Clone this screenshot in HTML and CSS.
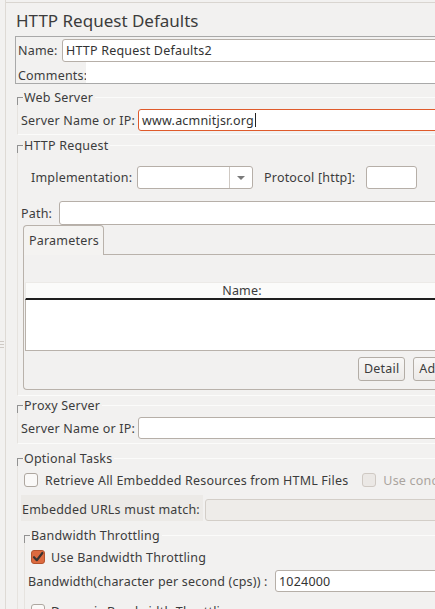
FILE: index.html
```html
<!DOCTYPE html>
<html>
<head>
<meta charset="utf-8">
<link rel="stylesheet" href="styles.css">
</head>
<body>
<div class="app">
  <div class="splitter"><div class="grip"></div></div>
  <div class="main">
    <div class="title">HTTP Request Defaults</div>

    <div class="name-panel">
      <div class="name-row">
        <span class="lbl-name">Name:</span>
        <div class="field">HTTP Request Defaults2</div>
      </div>
      <div class="comments-row">
        <span class="lbl-comments">Comments:</span>
        <div class="comments"></div>
      </div>
    </div>

    <div class="group web-group">
      <div class="legend">Web Server</div>
      <div class="row server-row">
        <span class="lbl-server">Server Name or IP:</span>
        <div class="field focus">www.acmnitjsr.org<span class="caret"></span></div>
      </div>
    </div>

    <div class="group http-group">
      <div class="legend">HTTP Request</div>
      <div class="row impl-row">
        <span class="lbl-impl">Implementation:</span>
        <div class="combo"><div class="combo-text"></div><div class="combo-btn"><span class="tri"></span></div></div>
        <span class="lbl-proto">Protocol [http]:</span>
        <div class="field proto-field"></div>
      </div>
      <div class="row path-row">
        <span class="lbl-path">Path:</span>
        <div class="field"></div>
      </div>
      <div class="tabs">
        <div class="tab">Parameters</div>
        <div class="tab-panel">
          <div class="thead">Name:</div>
          <div class="tbody"></div>
          <div class="btn-row">
            <div class="btn">Detail</div>
            <div class="btn">Add</div>
            <div class="btn">Add from Clipboard</div>
          </div>
        </div>
      </div>
    </div>

    <div class="group proxy-group">
      <div class="legend">Proxy Server</div>
      <div class="row server-row">
        <span class="lbl-server">Server Name or IP:</span>
        <div class="field"></div>
      </div>
    </div>

    <div class="group opt-group">
      <div class="legend">Optional Tasks</div>
      <div class="row cb-row retrieve-row">
        <span class="cb"></span>
        <span class="cb-label">Retrieve All Embedded Resources from HTML Files</span>
        <span class="cb disabled second-cb"></span>
        <span class="cb-label disabled-text">Use concurrent pool. Size:</span>
      </div>
      <div class="row embed-row">
        <span class="lbl-embed">Embedded URLs must match:</span>
        <div class="field disabled-field"></div>
      </div>
      <div class="group bw-group">
        <div class="legend">Bandwidth Throttling</div>
        <div class="row cb-row bw-cb-row">
          <span class="cb checked"><svg width="12" height="12" viewBox="0 0 12 12"><path d="M2 6.2 L4.8 9.2 L10.4 2" fill="none" stroke="#3b3431" stroke-width="2.2" stroke-linecap="round" stroke-linejoin="round"/></svg></span>
          <span class="cb-label">Use Bandwidth Throttling</span>
        </div>
        <div class="row bw-row">
          <span class="lbl-bw">Bandwidth(character per second (cps)) :</span>
          <div class="field">1024000</div>
        </div>
        <div class="row cb-row dyn-row">
          <span class="cb"></span>
          <span class="cb-label">Dynamic Bandwidth Throttling</span>
        </div>
      </div>
    </div>
  </div>
</div>
</body>
</html>
```

FILE: styles.css
```css
* { box-sizing: border-box; }

body {
  margin: 0;
  background: #f2f1f0;
  font-family: "Noto Sans", "DejaVu Sans", sans-serif;
  font-size: 12.5px;
  letter-spacing: 0.2px;
  color: #3c3c3c;
}

.app {
  display: flex;
  width: 435px;
  height: 609px;
  overflow: hidden;
}

.splitter {
  flex: none;
  width: 6px;
  border-right: 1px solid #dedad5;
  padding-top: 341px;
}

.grip {
  width: 4px;
  height: 8px;
  background: repeating-linear-gradient(#cfcac5 0 1px, transparent 1px 3px);
}

.main {
  flex: none;
  width: 453px;
  margin-top: 2px;
  border-top: 1px solid #d9d5d0;
  padding-left: 9px;
}

.title {
  height: 33px;
  padding: 2px 0 0 1px;
  font-size: 17px;
  letter-spacing: 0;
  line-height: 31px;
}

.field {
  flex: 1;
  height: 22px;
  border: 1px solid #b6afa8;
  border-radius: 3px;
  background: #fff;
  padding-left: 3px;
  display: flex;
  align-items: center;
  color: #333;
  white-space: nowrap;
}

.field.focus { border-color: #df5a2b; }

.caret {
  display: inline-block;
  width: 1px;
  height: 14px;
  background: #222;
  margin-left: 1px;
}

/* Name panel */
.name-panel {
  border: 1px solid #a9a9a9;
  border-right: none;
}

.name-row {
  height: 25px;
  padding: 2px 0 0 2px;
  display: flex;
  align-items: center;
}

.name-row .field { height: 23px; }

.lbl-name { width: 44px; flex: none; }

.comments-row {
  height: 21px;
  padding-left: 2px;
  display: flex;
  align-items: flex-end;
}

.lbl-comments { width: 68px; flex: none; line-height: 15px; }

.comments {
  flex: 1;
  align-self: stretch;
  background: #fff;
}

/* Groups */
.group {
  position: relative;
  border: 1px solid #fbfbfa;
  border-left-color: #e6e3df;
  margin-left: 2px;
}

.group::before {
  content: "";
  position: absolute;
  left: -1px;
  top: -1px;
  width: 5px;
  height: 7px;
  border-left: 1px solid #929292;
  border-top: 1px solid #929292;
}

.legend {
  width: fit-content;
  margin: -7px 0 0 6px;
  height: 14px;
  line-height: 14px;
  padding: 0 2px 0 0;
  background: #f2f1f0;
  white-space: nowrap;
}

.row {
  display: flex;
  align-items: center;
  white-space: nowrap;
}

.web-group { margin-top: 13px; padding-bottom: 3px; }
.server-row { margin-top: 4px; height: 22px; padding-left: 3px; }
.lbl-server { width: 117px; flex: none; }

.http-group { margin-top: 10px; padding-bottom: 5px; }

.impl-row { margin-top: 13px; height: 23px; padding-left: 13px; }
.lbl-impl { width: 106px; flex: none; }

.combo {
  flex: none;
  width: 116px;
  height: 23px;
  display: flex;
  border: 1px solid #b6afa8;
  border-radius: 3px;
  background: #fff;
}

.combo-text { flex: 1; }

.combo-btn {
  width: 23px;
  border-left: 1px solid #cfc9c3;
  display: flex;
  align-items: center;
  justify-content: center;
}

.tri {
  width: 0;
  height: 0;
  border-left: 4px solid transparent;
  border-right: 4px solid transparent;
  border-top: 4px solid #7a7a7a;
}

.lbl-proto { margin-left: 11px; width: 102px; flex: none; }
.proto-field { flex: none; width: 51px; height: 23px; }

.path-row { margin-top: 12px; height: 24px; padding-left: 3px; }
.path-row .field { height: 24px; }
.lbl-path { width: 38px; flex: none; }

/* Tabs */
.tabs { margin-left: 5px; }

.tab {
  position: relative;
  z-index: 1;
  width: 81px;
  height: 30px;
  margin-bottom: -1px;
  border: 1px solid #b9b2ab;
  border-bottom: none;
  border-radius: 4px 4px 0 0;
  background: #f4f3f1;
  padding-left: 5px;
  line-height: 30px;
}

.tab-panel {
  border: 1px solid #b9b2ab;
  border-right: none;
  border-radius: 0 0 0 4px;
  padding: 27px 0 8px 1px;
}

.thead {
  height: 18px;
  background: #fbfbfa;
  border-top: 1px solid #eceae7;
  border-left: 1px solid #eceae7;
  border-bottom: 2px solid #1f1f1f;
  text-align: center;
  line-height: 15px;
}

.tbody {
  height: 51px;
  background: #fff;
  border-left: 1px solid #b9b2ab;
  border-bottom: 1px solid #b9b2ab;
}

.btn-row {
  margin-top: 6px;
  padding-left: 333px;
  display: flex;
  gap: 8px;
  white-space: nowrap;
}

.btn {
  flex: none;
  height: 24px;
  padding: 0 5px;
  border: 1px solid #b3ada6;
  border-radius: 3px;
  background: linear-gradient(#f8f7f6, #eceae8);
  line-height: 22px;
}

.proxy-group { margin-top: 9px; padding-bottom: 4px; }

/* Optional tasks */
.opt-group { margin-top: 14px; padding-bottom: 20px; }

.cb {
  flex: none;
  width: 14px;
  height: 14px;
  border: 1px solid #aea7a0;
  border-radius: 3px;
  background: #faf9f8;
  display: flex;
  align-items: center;
  justify-content: center;
}

.cb.checked {
  background: #dd6a3f;
  border-color: #b4542f;
}

.cb.disabled {
  background: #ebe8e5;
  border-color: #cfc9c3;
}

.cb-row { height: 14px; }

.retrieve-row { margin-top: 7px; padding-left: 6px; }
.retrieve-row .cb-label { margin-left: 7px; }
.second-cb { margin-left: 14px; }
.retrieve-row .disabled-text { margin-left: 7px; color: #aaa49e; }

.embed-row { margin-top: 8px; height: 26px; padding-left: 3px; align-items: flex-end; }

.lbl-embed {
  flex: none;
  width: 182px;
  height: 26px;
  padding: 4px 0 0 1px;
  line-height: 22px;
  background: #eceae7;
}

.disabled-field {
  margin-left: 2px;
  background: #eeece9;
  border-color: #d3cec8;
}

.bw-group { margin: 14px 0 0 6px; padding-bottom: 10px; }

.bw-cb-row { margin-top: 7px; padding-left: 6px; }
.bw-cb-row .cb-label, .dyn-row .cb-label { margin-left: 6px; }

.bw-row { margin-top: 6px; height: 22px; padding-left: 3px; }
.lbl-bw { width: 247px; flex: none; }

.dyn-row { margin-top: 12px; padding-left: 6px; }
```
